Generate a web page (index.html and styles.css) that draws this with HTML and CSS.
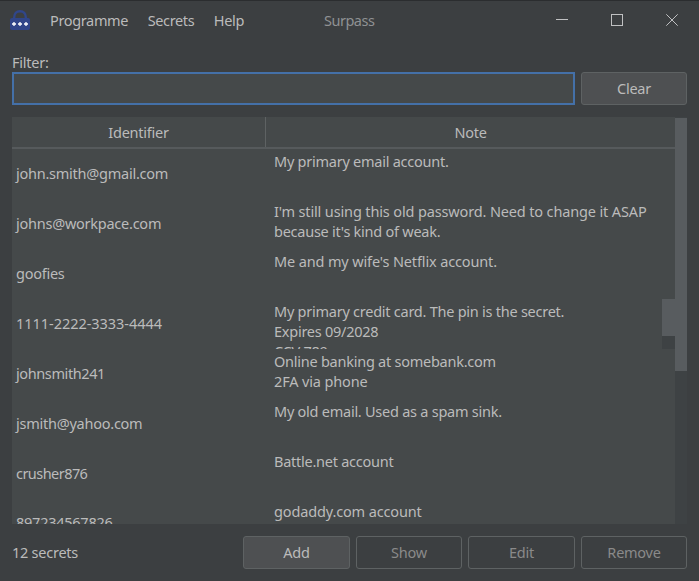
FILE: index.html
```html
<!DOCTYPE html>
<html lang="en">
<head>
<meta charset="utf-8">
<title>Surpass</title>
<link rel="stylesheet" href="styles.css">
</head>
<body>
<div class="window">
  <header class="titlebar">
    <svg class="logo" width="20" height="21" viewBox="0 0 20 21">
      <path d="M4.200 9V7.500C4.200 3.600 6.500 1.200 10 1.200S15.800 3.600 15.800 7.500V9" fill="none" stroke="#30468a" stroke-width="2.400"/>
      <rect x="0" y="8" width="20" height="12" rx="2" fill="#304589"/>
      <path d="M2 14h4M8 14h4M14 14h4" stroke="#fff" stroke-width="1.600"/>
      <path d="M4 12v4M10 12v4M16 12v4" stroke="#fff" stroke-width="1.300"/>
    </svg>
    <nav class="menu"><span>Programme</span><span>Secrets</span><span>Help</span></nav>
    <span class="title">Surpass</span>
    <svg class="controls" width="123" height="12" viewBox="0 0 123 12" fill="none" stroke="#c0c1c2">
      <path d="M0 5.500h12"/>
      <rect x="55.500" y=".5" width="11" height="11"/>
      <path d="M110.300.3l11.400 11.400M121.700.3L110.300 11.700"/>
    </svg>
  </header>
  <main class="content">
    <label class="label" for="filter">Filter:</label>
    <div class="filter-row">
      <input id="filter" class="filter" type="text">
      <button class="btn">Clear</button>
    </div>
    <div class="table">
      <div class="grid">
        <div class="head"><div class="head-id">Identifier</div><div class="head-note">Note</div></div>
        <div class="row"><div class="id">john.smith@gmail.com</div><div class="note">My primary email account.</div></div>
        <div class="row"><div class="id">johns@workpace.com</div><div class="note"><span class="loose">I'm still using this old password. Need to change it ASAP</span><br>because it's kind of weak.</div></div>
        <div class="row"><div class="id">goofies</div><div class="note"><span class="loose">Me and my wife's Netflix account.</span></div></div>
        <div class="row"><div class="id card">1111-2222-3333-4444</div><div class="note">My primary credit card. The pin is the secret.<br>Expires 09/2028<br>CCV 789</div><div class="note-scroll"><div class="note-thumb"></div></div></div>
        <div class="row"><div class="id tight">johnsmith241</div><div class="note">Online banking at somebank.com<br><span class="loose">2FA via phone</span></div></div>
        <div class="row"><div class="id">jsmith@yahoo.com</div><div class="note">My old email. Used as a spam sink.</div></div>
        <div class="row"><div class="id tighter">crusher876</div><div class="note">Battle.net account</div></div>
        <div class="row"><div class="id last">897234567826</div><div class="note"><span class="loose">godaddy.com account</span></div></div>
      </div>
      <div class="scroll"><div class="thumb"></div></div>
    </div>
    <footer class="footer">
      <span class="count">12 secrets</span>
      <button class="btn wide">Add</button>
      <button class="btn" disabled>Show</button>
      <button class="btn wide" disabled>Edit</button>
      <button class="btn" disabled>Remove</button>
    </footer>
  </main>
</div>
</body>
</html>
```
FILE: styles.css
```css
* { box-sizing: border-box; }
body {
  margin: 0;
  background: #3c3f41;
  color: #bbbbbb;
  font: 14.5px/20px "Noto Sans", "Open Sans", sans-serif;
  letter-spacing: -0.25px;
}
.window { width: 699px; height: 581px; overflow: hidden; border-top: 1px solid #2b2d2f; }
.titlebar { height: 52px; display: flex; align-items: flex-start; padding: 9px 20px 0 10px; }
.logo { flex: none; }
.menu { display: flex; gap: 19.5px; margin-left: 20px; letter-spacing: -0.35px; }
.title { margin-left: 80px; color: #8f9193; letter-spacing: -0.5px; }
.controls { margin: 4px 0 0 auto; }
.content { padding: 0 12px; }
.label { display: block; height: 19px; line-height: 19px; }
.filter-row { display: flex; gap: 6px; height: 33px; }
.filter {
  flex: 1;
  min-width: 0;
  border: 2px solid #4470a8;
  background: #45494a;
  color: #bbbbbb;
  font: inherit;
  outline: none;
}
.btn {
  width: 106px;
  height: 33px;
  padding: 0 0 2px;
  border: 1px solid #5e6263;
  border-radius: 3px;
  background: #4e5052;
  color: #bbbbbb;
  font: inherit;
  letter-spacing: inherit;
}
.btn.wide { width: 107px; }
.btn:disabled { background: #3c3f41; color: #8a8a8a; }
.table { display: flex; height: 407px; margin-top: 12px; overflow: hidden; background: #45494a; }
.grid { width: 663px; }
.head { display: flex; height: 32px; border-bottom: 2px solid #565a5c; line-height: 31px; text-align: center; }
.head-id { width: 254px; border-right: 1px solid #5e6263; }
.head-note { flex: 1; }
.row { display: flex; height: 50px; overflow: hidden; }
.id { width: 262px; padding-left: 4px; line-height: 48px; }
.card { letter-spacing: -0.04px; }
.tight { letter-spacing: -0.4px; }
.tighter { letter-spacing: -0.55px; }
.last { line-height: 46px; }
.note { flex: 1; padding-top: 2px; white-space: nowrap; }
.loose { letter-spacing: -0.14px; }
.note-scroll { width: 13px; background: #3e4244; }
.note-thumb { height: 37px; background: #585c5f; }
.scroll { width: 12px; padding-top: 1px; background: #3e4244; }
.thumb { height: 253px; background: #585c5f; }
.footer { display: flex; gap: 6px; padding-top: 12px; }
.count { flex: 1; line-height: 33px; }
```
